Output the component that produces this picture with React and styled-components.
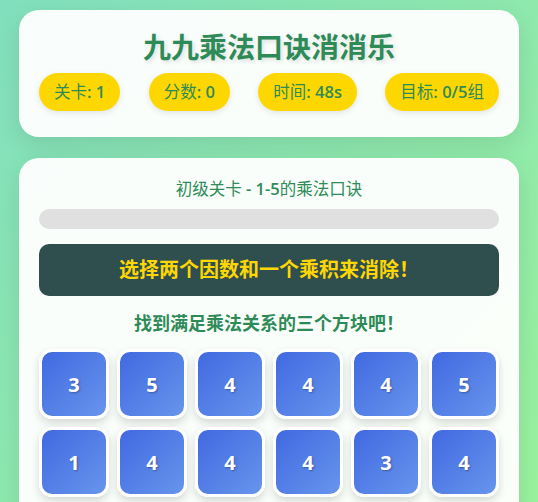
import React from "react";
import styled, { createGlobalStyle } from "styled-components";

const GlobalStyle = createGlobalStyle`
    html, body {
        margin: 0;
        overflow: hidden;
    }
    body {
        padding: 10px;
        min-height: 100vh;
        box-sizing: border-box;
        background: linear-gradient(135deg, #82dfbe 0%, #9cf49a 100%);
        font-family: "Open Sans", "Noto Sans CJK SC", sans-serif;
    }
`;

const Container = styled.div`
    max-width: 500px;
    margin: 0 auto;
`;

const Card = styled.div`
    background: rgba(255, 255, 255, 0.95);
    border-radius: 20px;
    padding: 20px;
    margin-bottom: ${props => props.gap || 0}px;
    box-shadow: 0 8px 24px rgba(0, 0, 0, 0.1);
`;

const Title = styled.h1`
    margin: 0 0 9px;
    text-align: center;
    font-size: 28px;
    line-height: 34px;
    font-weight: 700;
    color: #2e8b57;
    text-shadow: 2px 2px 4px rgba(0, 0, 0, 0.12);
`;

const StatsRow = styled.div`
    display: flex;
    justify-content: space-between;
    margin-bottom: 6px;
`;

const Stat = styled.div`
    background: #ffd700;
    color: #2e8b57;
    border-radius: 20px;
    padding: 8px 15px;
    font-size: 16.5px;
    line-height: 22px;
    box-shadow: 0 2px 6px rgba(0, 0, 0, 0.1);
`;

const Num = styled.span`
    font-weight: 600;
`;

const LevelInfo = styled.div`
    text-align: center;
    color: #2e8b57;
    font-size: 16.5px;
    line-height: 22px;
    margin-bottom: 9px;
`;

const ProgressBar = styled.div`
    height: 20px;
    border-radius: 10px;
    background: #e0e0e0;
    overflow: hidden;
    margin-bottom: 15px;
`;

const ProgressFill = styled.div`
    height: 100%;
    background: #2e8b57;
`;

const Instruction = styled.div`
    background: #2f4f4f;
    color: #ffd700;
    border-radius: 10px;
    padding: 12px;
    text-align: center;
    font-size: 20px;
    line-height: 28px;
    font-weight: 700;
    margin-bottom: 15px;
`;

const Hint = styled.div`
    text-align: center;
    color: #2e8b57;
    font-size: 18px;
    line-height: 24px;
    font-weight: 700;
    margin-bottom: 14px;
`;

const Grid = styled.div`
    display: grid;
    grid-template-columns: repeat(6, 1fr);
    gap: 8px;
`;

const Tile = styled.div`
    aspect-ratio: 1;
    box-sizing: border-box;
    border: 3px solid #fff;
    border-radius: 13px;
    background: linear-gradient(135deg, #4169e1 0%, #6795ec 100%);
    box-shadow: 0 4px 8px rgba(0, 0, 0, 0.15);
    display: flex;
    align-items: center;
    justify-content: center;
    color: #fff;
    font-size: 20px;
    font-weight: 700;
    text-shadow: 1px 1px 2px rgba(0, 0, 0, 0.3);
`;

const tiles = [3, 5, 4, 4, 4, 5, 1, 4, 4, 4, 3, 4, 2, 5, 3, 4, 1, 5];

const App = () => {
    const progress = 0;
    return (
        <>
            <GlobalStyle />
            <Container>
                <Card gap={21}>
                    <Title>九九乘法口诀消消乐</Title>
                    <StatsRow>
                        <Stat>关卡<Num>: 1</Num></Stat>
                        <Stat>分数<Num>: 0</Num></Stat>
                        <Stat>时间<Num>: 48s</Num></Stat>
                        <Stat>目标<Num>: 0/5</Num>组</Stat>
                    </StatsRow>
                </Card>
                <Card>
                    <LevelInfo>初级关卡<Num> - 1-5</Num>的乘法口诀</LevelInfo>
                    <ProgressBar>
                        <ProgressFill style={{ width: `${progress}%` }} />
                    </ProgressBar>
                    <Instruction>选择两个因数和一个乘积来消除！</Instruction>
                    <Hint>找到满足乘法关系的三个方块吧！</Hint>
                    <Grid>
                        {tiles.map((n, i) => (
                            <Tile key={i}>{n}</Tile>
                        ))}
                    </Grid>
                </Card>
            </Container>
        </>
    );
};

export default App;
